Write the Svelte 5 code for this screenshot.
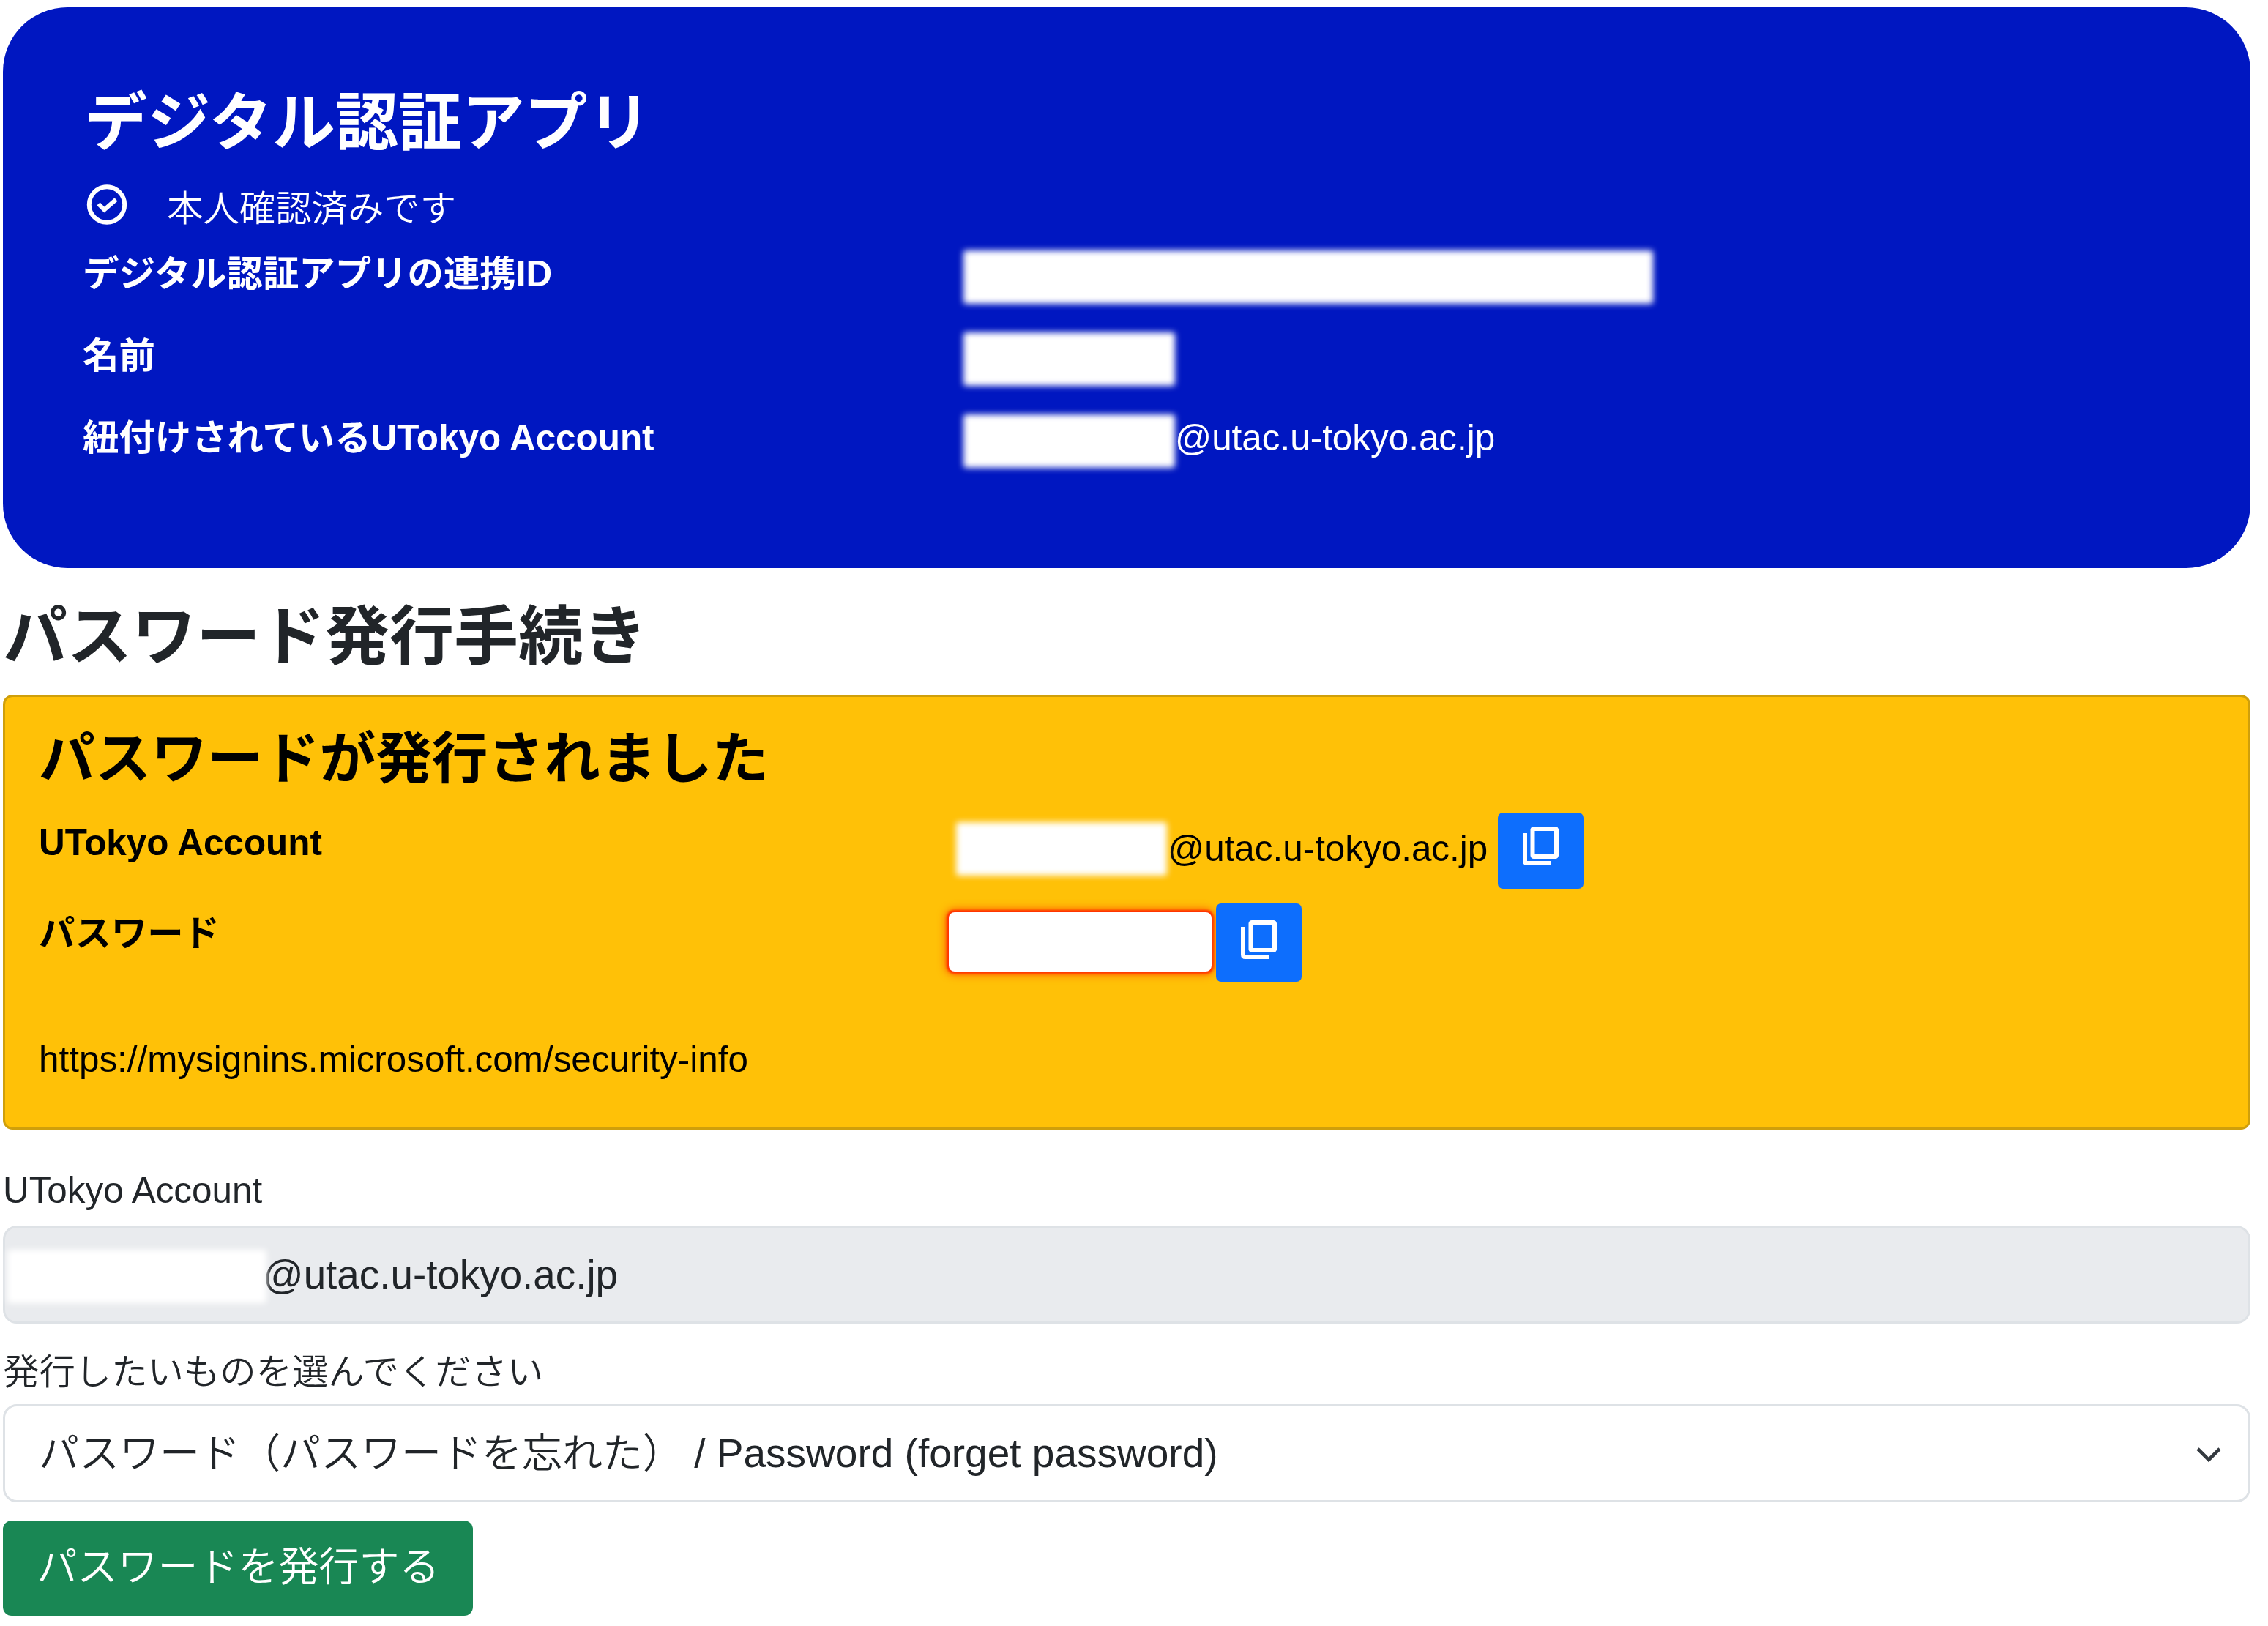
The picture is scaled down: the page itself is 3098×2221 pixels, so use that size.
<script>
    let copied = '';

    const domain = '@utac.u-tokyo.ac.jp';

    const profile = [
        { label: 'デジタル認証アプリの連携ID', width: 942, suffix: '' },
        { label: '名前', width: 289, suffix: '' },
        { label: '紐付けされているUTokyo Account', width: 289, suffix: domain }
    ];

    function copy(field) {
        copied = field;
    }
</script>

{#snippet copyIcon()}
    <svg class="copy-icon" viewBox="0 0 50 55" fill="none" stroke="#ffffff" stroke-width="6" stroke-linejoin="round">
        <rect x="13.5" y="4" width="32.5" height="38" rx="1.5" />
        <path d="M3 10V48Q3 51 6 51H38.5" />
    </svg>
{/snippet}

<main>
    <section class="card">
        <h2>デジタル認証アプリ</h2>
        <div class="status">
            <svg class="check" viewBox="0 0 56 56" fill="none" stroke="#ffffff" stroke-width="6">
                <circle cx="28" cy="28.5" r="24.2" />
                <path d="M16.5 27.5L24.5 35.5L40.5 21.5" />
            </svg>
            <span>本人確認済みです</span>
        </div>
        {#each profile as item}
            <div class="row">
                <strong>{item.label}</strong>
                <div class="value">
                    <span class="mask" style="width: {item.width}px"></span>
                    <span>{item.suffix}</span>
                </div>
            </div>
        {/each}
    </section>

    <h2 class="heading">パスワード発行手続き</h2>

    <section class="alert">
        <h3>パスワードが発行されました</h3>
        <div class="issued account">
            <strong>UTokyo Account</strong>
            <div class="value">
                <span class="mask"></span>
                <span class="domain">{domain}</span>
                <button class="copy" aria-label="copy account" on:click={() => copy('account')}>{@render copyIcon()}</button>
            </div>
        </div>
        <div class="issued password">
            <strong>パスワード</strong>
            <div class="value">
                <span class="secret"></span>
                <button class="copy" aria-label="copy password" on:click={() => copy('password')}>{@render copyIcon()}</button>
            </div>
        </div>
        <p>https://mysignins.microsoft.com/security-info</p>
    </section>

    <div class="label">UTokyo Account</div>
    <div class="control disabled">
        <span class="mask"></span>
        <span>{domain}</span>
    </div>

    <div class="label second">発行したいものを選んでください</div>
    <div class="control select">
        <span>パスワード（パスワードを忘れた） / Password (forget password)</span>
        <svg class="chevron" viewBox="0 0 34 22" fill="none" stroke="#343a40" stroke-width="4.6">
            <path d="M2 3L17 18L32 3" />
        </svg>
    </div>

    <button class="submit">パスワードを発行する</button>
</main>

<style>
    :global(body) {
        background-color: #ffffff;
    }

    main {
        box-sizing: border-box;
        width: 3098px;
        height: 2221px;
        padding: 10px 24px 0 4px;
        font-family: "Liberation Sans", "Noto Sans CJK JP", sans-serif;
        font-size: 49.4px;
        font-weight: 350;
        line-height: 74px;
        color: #212529;
        white-space: nowrap;
        overflow: hidden;
    }

    h2, h3, p {
        margin: 0;
    }

    h2 {
        font-size: 86.2px;
        line-height: 106px;
        font-weight: 700;
    }

    strong {
        font-weight: 700;
    }

    button {
        border: none;
        padding: 0;
        font-family: inherit;
        color: #ffffff;
    }

    .card {
        box-sizing: border-box;
        height: 766px;
        padding: 105px 111px 0;
        border-radius: 88px;
        background-color: #0017c1;
        color: #ffffff;
    }

    .status {
        display: flex;
        margin: 27px 0 15px;
    }

    .check {
        width: 56px;
        height: 56px;
        margin: 3px 54px 0 3px;
    }

    .row {
        display: grid;
        grid-template-columns: 1203px 1fr;
        height: 112px;
        margin-left: -2px;
    }

    .value {
        display: flex;
        align-items: flex-start;
    }

    .mask {
        flex: none;
        height: 73px;
        margin-top: 5px;
        border-radius: 4px;
        background-color: #ffffff;
        filter: blur(4px);
    }

    .heading {
        margin: 41px 0 26px;
        font-size: 88px;
    }

    .alert {
        box-sizing: border-box;
        height: 594px;
        padding: 40px 46px 0;
        border: 3px solid #cf9f0b;
        border-radius: 13px;
        background-color: #ffc107;
        color: #000000;
    }

    h3 {
        margin-bottom: 26px;
        font-size: 76.7px;
        line-height: 90px;
        padding-bottom: 2px;
        font-weight: 700;
    }

    .issued {
        display: grid;
        grid-template-columns: 1243px 1fr;
    }

    .account {
        height: 124px;
    }

    .account strong {
        padding-top: 4px;
    }

    .account .mask {
        width: 288px;
        margin: 13px 1px 0 10px;
    }

    .domain {
        width: 451px;
        padding-top: 12px;
    }

    .copy {
        width: 117px;
        height: 104px;
        border-radius: 7px;
        background-color: #0d6efd;
        display: flex;
        justify-content: center;
    }

    .copy-icon {
        width: 50px;
        height: 55px;
        margin-top: 18px;
    }

    .password {
        height: 107px;
    }

    .password strong {
        padding-top: 4px;
    }

    .secret {
        width: 359px;
        height: 81px;
        margin: 12px 6px 0 0;
        border-radius: 8px;
        background-color: #ffffff;
        box-shadow: 0 0 3px 3px #ff3300, 0 0 12px 4px #ff5a00;
    }

    .password .copy {
        height: 107px;
    }

    .password .copy-icon {
        margin-top: 22px;
    }

    p {
        margin-top: 69px;
    }

    .label {
        margin: 46px 0 11px;
    }

    .second {
        margin: 29px 0 7px;
    }

    .control {
        box-sizing: border-box;
        display: flex;
        align-items: center;
        height: 134px;
        border: 3px solid #dee2e6;
        border-radius: 19px;
        font-size: 55px;
    }

    .disabled {
        padding-left: 3px;
        background-color: #e9ebee;
        font-size: 54.8px;
    }

    .disabled .mask {
        width: 354px;
        margin: 5px -5px 0 0;
    }

    .select {
        justify-content: space-between;
        padding: 0 37px 0 46px;
    }

    .chevron {
        width: 34px;
        height: 22px;
        margin-top: 4px;
    }

    .submit {
        width: 642px;
        height: 130px;
        margin-top: 25px;
        padding: 0 0 14px 1px;
        border-radius: 12px;
        background-color: #198754;
        font-size: 55px;
        font-weight: 350;
    }
</style>
